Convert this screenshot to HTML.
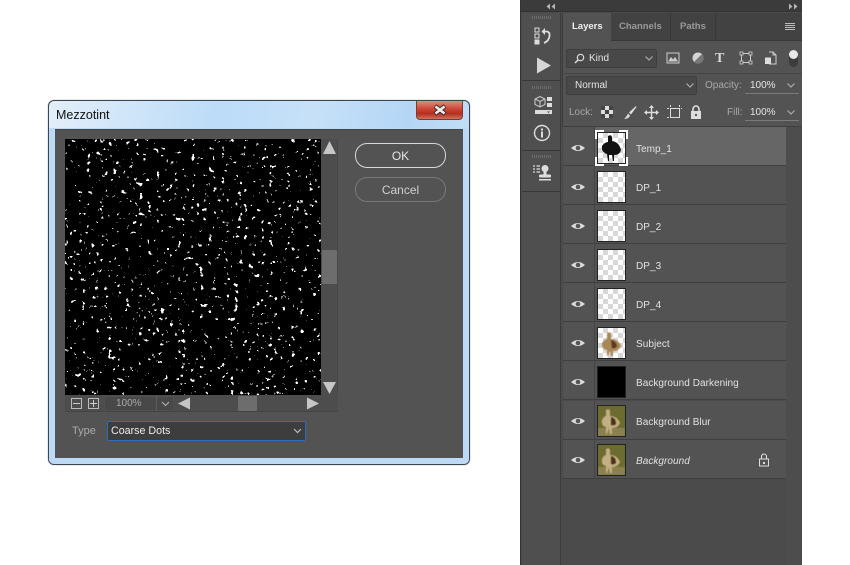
<!DOCTYPE html>
<html><head><meta charset="utf-8"><style>
*{box-sizing:border-box}
html,body{margin:0;padding:0;background:#fff}
body{width:850px;height:565px;position:relative;overflow:hidden;font-family:"Liberation Sans",sans-serif;font-size:10px;color:#ddd}
.a{position:absolute}
.t{position:absolute;white-space:nowrap;line-height:14px}
.row{position:absolute;left:563px;width:223px;height:39px;border-bottom:1px solid #3f3f3f;background:#535353}
.eyec{position:absolute;left:0;top:0;width:32px;height:38px;border-right:1px solid #454545}
.thumb{position:absolute;left:597px;width:29px;height:32px;border:1px solid #222;background-color:#fff;background-image:linear-gradient(45deg,#d8d8d8 25%,transparent 25%,transparent 75%,#d8d8d8 75%),linear-gradient(45deg,#d8d8d8 25%,transparent 25%,transparent 75%,#d8d8d8 75%);background-size:10px 10px;background-position:0 0,5px 5px}
.lbl{position:absolute;left:636px;color:#e2e2e2;font-size:10px;line-height:14px;white-space:nowrap;letter-spacing:.05px}
.bl{filter:blur(.6px)}
</style></head><body>

<!-- Dialog -->
<div class="a" style="left:48px;top:100px;width:422px;height:365px;border:1px solid #3c4650;border-radius:6px;background:linear-gradient(100deg,#e3eefa 0%,#bcdcf8 35%,#c6e0f8 55%,#b4d6f5 75%,#cfe4f8 100%);box-shadow:0 0 1px #777"></div>
<div class="a" style="left:49px;top:128px;width:420px;height:336px;border-radius:0 0 5px 5px;background:#bcd9f5"></div>
<div class="t" style="left:56px;top:108px;color:#111;font-size:12.500px">Mezzotint</div>
<div class="a" style="left:416px;top:101px;width:47px;height:19px;border:1px solid #7d3a33;border-top:0;border-radius:0 0 4px 4px;background:linear-gradient(#e08d7f,#c9402f 50%,#b32f22 70%,#d0705c)"></div>
<svg class="a" style="left:432px;top:104px" width="16" height="12"><path d="M3 2 L13 10 M13 2 L3 10" stroke="#3a2a2a" stroke-width="4.400"/><path d="M3.500 2.500 L12.500 9.500 M12.500 2.500 L3.500 9.500" stroke="#f2ecec" stroke-width="2.600"/></svg>

<div class="a" style="left:55px;top:129px;width:408px;height:329px;background:#535353;border-top:1px solid #444"></div>

<!-- Preview -->
<svg class="a" style="left:65px;top:139px" width="256" height="256" shape-rendering="crispEdges">
<defs><filter id="n" x="0" y="0" width="100%" height="100%" color-interpolation-filters="sRGB">
<feTurbulence type="fractalNoise" baseFrequency="0.23" numOctaves="3" seed="7"/>
<feColorMatrix type="matrix" values="0 0 0 0 1 0 0 0 0 1 0 0 0 0 1 9 9 0 0 -11.100"/>
<feComponentTransfer><feFuncA type="discrete" tableValues="0 0 1 1"/></feComponentTransfer>
</filter></defs>
<rect width="256" height="256" fill="#000"/>
<rect width="256" height="256" filter="url(#n)"/>
</svg>

<!-- Preview scrollbars -->
<div class="a" style="left:321px;top:139px;width:17px;height:272px;background:#4d4d4d;border-right:1px solid #474747"></div>
<div class="a" style="left:65px;top:395px;width:273px;height:17px;background:#4d4d4d;border-bottom:1px solid #444"></div>
<svg class="a" style="left:322px;top:140px" width="15" height="268"><path d="M1 14 L7.500 1 L14 14Z" fill="#c6c6c6"/><path d="M1 242 H14 L7.500 254Z" fill="#c6c6c6"/><rect x="0" y="110" width="15" height="34" rx="1" fill="#6d6d6d"/></svg>
<div class="a" style="left:71px;top:398px;width:11px;height:11px;border:1px solid #bbb"></div>
<div class="a" style="left:73px;top:403px;width:7px;height:1px;background:#ccc"></div>
<div class="a" style="left:88px;top:398px;width:11px;height:11px;border:1px solid #bbb"></div>
<div class="a" style="left:90px;top:403px;width:7px;height:1px;background:#ccc"></div>
<div class="a" style="left:93px;top:400px;width:1px;height:7px;background:#ccc"></div>
<div class="a" style="left:104px;top:396px;width:70px;height:15px;background:#484848;border:1px solid #505050"></div>
<div class="t" style="left:116px;top:397px;color:#a8a8a8;font-size:10px">100%</div>
<div class="a" style="left:156px;top:396px;width:1px;height:15px;background:#5c5c5c"></div>
<svg class="a" style="left:160px;top:400px" width="11" height="8"><path d="M2 2 L5.500 5.500 L9 2" stroke="#aaa" fill="none" stroke-width="1.200"/></svg>
<svg class="a" style="left:177px;top:396px" width="143" height="15"><path d="M1 7.500 L13 1.500 V13.500Z" fill="#c6c6c6"/><path d="M142 7.500 L130 1.500 V13.500Z" fill="#c6c6c6"/><rect x="61" y="0" width="19" height="15" rx="1" fill="#6d6d6d"/></svg>

<div class="t" style="left:72px;top:424px;color:#aaa;font-size:11px">Type</div>
<div class="a" style="left:107px;top:421px;width:199px;height:20px;background:#3d3d3d;border:1px solid #2f6db5;border-radius:2px"></div>
<div class="t" style="left:111px;top:424px;color:#ececec;font-size:10.700px">Coarse Dots</div>
<svg class="a" style="left:292px;top:427px" width="11" height="8"><path d="M2 2 L5.500 5.500 L9 2" stroke="#bbb" fill="none" stroke-width="1.200"/></svg>

<div class="a" style="left:355px;top:143px;width:91px;height:25px;border:1px solid #d8d8d8;border-radius:12px"></div>
<div class="t" style="left:355px;top:149px;width:91px;text-align:center;color:#e6e6e6;font-size:12px">OK</div>
<div class="a" style="left:355px;top:177px;width:91px;height:25px;border:1px solid #787878;border-radius:12px"></div>
<div class="t" style="left:355px;top:183px;width:91px;text-align:center;color:#d0d0d0;font-size:12px">Cancel</div>

<!-- Photoshop panel -->
<div class="a" style="left:520px;top:0;width:282px;height:565px;background:#4b4b4b;border-left:1px solid #333"></div>
<div class="a" style="left:521px;top:0;width:281px;height:12px;background:#3b3b3b;border-bottom:1px solid #333"></div>
<svg class="a" style="left:546px;top:3px" width="10" height="7"><path d="M4 0.500 L0.500 3.500 L4 6.500Z M9 0.500 L5.500 3.500 L9 6.500Z" fill="#b4b4b4"/></svg>
<svg class="a" style="left:788px;top:3px" width="10" height="7"><path d="M1 0.500 L4.500 3.500 L1 6.500Z M6 0.500 L9.500 3.500 L6 6.500Z" fill="#b4b4b4"/></svg>

<!-- left icon dock -->
<div class="a" style="left:522px;top:13px;width:39px;height:552px;background:#4f4f4f;border-right:1px solid #3c3c3c"></div>
<div class="a" style="left:522px;top:80px;width:39px;height:1px;background:#383838"></div>
<div class="a" style="left:522px;top:150px;width:39px;height:1px;background:#383838"></div>
<div class="a" style="left:522px;top:191px;width:39px;height:1px;background:#383838"></div>
<div class="a" style="left:532px;top:16px;width:19px;height:3px;background:repeating-linear-gradient(90deg,#6b6b6b 0 1px,transparent 1px 2px)"></div>
<div class="a" style="left:532px;top:86px;width:19px;height:3px;background:repeating-linear-gradient(90deg,#6b6b6b 0 1px,transparent 1px 2px)"></div>
<div class="a" style="left:532px;top:155px;width:19px;height:3px;background:repeating-linear-gradient(90deg,#6b6b6b 0 1px,transparent 1px 2px)"></div>
<svg class="a" style="left:534px;top:27px" width="18" height="19"><rect x="1" y="1" width="4" height="4" fill="none" stroke="#ddd"/><rect x="1" y="7" width="4" height="4" fill="none" stroke="#ddd"/><rect x="0.500" y="12.500" width="5" height="5" fill="#ddd"/><path d="M9 4.500 H13 Q16 5 15.500 9 Q15 14 10 16" fill="none" stroke="#ddd" stroke-width="1.800"/><path d="M11 1 L7.500 4.500 L11 8Z" fill="#ddd"/></svg>
<svg class="a" style="left:536px;top:57px" width="16" height="17"><path d="M1 0.500 L15 8.500 L1 16.500Z" fill="#d6d6d6"/></svg>
<svg class="a" style="left:534px;top:96px" width="19" height="20"><path d="M6 0.500 L11 3 V8.500 L6 11 L1 8.500 V3Z M1 3 L6 5.500 L11 3 M6 5.500 V11" fill="none" stroke="#ccc"/><rect x="13" y="1" width="5" height="4" fill="#ddd"/><rect x="13" y="7" width="5" height="4" fill="#ddd"/><rect x="1" y="14" width="17" height="4" fill="#ddd"/><path d="M13 15.500 H16 L14.500 17Z" fill="#444"/></svg>
<svg class="a" style="left:533px;top:124px" width="18" height="18"><circle cx="9" cy="9" r="7.500" fill="none" stroke="#ddd" stroke-width="1.400"/><rect x="8" y="7.500" width="2" height="6" fill="#ddd"/><rect x="8" y="4.500" width="2" height="2" fill="#ddd"/></svg>
<svg class="a" style="left:532px;top:164px" width="20" height="18"><path d="M1 2 H3 M4.500 2 H8 M1 5 H3 M4.500 5 H8 M1 8 H3 M4.500 8 H8" stroke="#ddd" stroke-width="1.200"/><circle cx="13" cy="4.500" r="3.500" fill="#ddd"/><rect x="11.500" y="6" width="3" height="5" fill="#ddd"/><rect x="7" y="10.500" width="12" height="3" rx="1" fill="#ddd"/><rect x="7" y="15" width="12" height="1.500" fill="#ddd"/></svg>

<!-- main panel -->
<div class="a" style="left:562px;top:13px;width:240px;height:114px;background:#535353;border-left:1px solid #3c3c3c"></div>
<div class="a" style="left:786px;top:127px;width:14px;height:438px;background:#4d4d4d"></div>
<div class="a" style="left:563px;top:479px;width:223px;height:86px;background:#4b4b4b"></div>
<div class="a" style="left:563px;top:13px;width:239px;height:28px;background:#424242;border-bottom:1px solid #393939"></div>
<div class="a" style="left:563px;top:13px;width:48px;height:29px;background:#535353"></div>
<div class="a" style="left:670px;top:13px;width:1px;height:28px;background:#383838"></div>
<div class="a" style="left:715px;top:13px;width:1px;height:28px;background:#383838"></div>
<div class="t" style="left:572px;top:20px;color:#f0f0f0;font-weight:bold;font-size:9.500px">Layers</div>
<div class="t" style="left:619px;top:20px;color:#9a9a9a;font-weight:bold;font-size:9.500px">Channels</div>
<div class="t" style="left:680px;top:20px;color:#9a9a9a;font-weight:bold;font-size:9.500px">Paths</div>
<div class="a" style="left:785px;top:23px;width:10px;height:8px;background:repeating-linear-gradient(#bbb 0 1px,transparent 1px 2px)"></div>

<!-- Kind row -->
<div class="a" style="left:566px;top:49px;width:91px;height:19px;background:#484848;border:1px solid #3f3f3f;border-radius:2px"></div>
<svg class="a" style="left:574px;top:53px" width="11" height="11"><circle cx="6.500" cy="4.500" r="3.200" fill="none" stroke="#ddd" stroke-width="1.200"/><path d="M4 7 L1 10" stroke="#ddd" stroke-width="1.500"/></svg>
<div class="t" style="left:589px;top:52px;color:#e4e4e4">Kind</div>
<svg class="a" style="left:644px;top:55px" width="10" height="7"><path d="M1.500 1.500 L5 5 L8.500 1.500" stroke="#aaa" fill="none" stroke-width="1.200"/></svg>
<svg class="a" style="left:666px;top:52px" width="14" height="12"><rect x="1" y="1" width="12" height="10" fill="none" stroke="#ccc"/><path d="M2 9.500 L5 5 L7 7.500 L9 5 L12 9.500Z" fill="#ccc"/></svg>
<svg class="a" style="left:691px;top:51px" width="14" height="14"><circle cx="7" cy="7" r="5.500" fill="#d4d4d4"/><path d="M10.900 3.100 A5.500 5.500 0 0 1 3.100 10.900Z" fill="#777"/></svg>
<div class="t" style="left:715px;top:51px;color:#d8d8d8;font:bold 14px 'Liberation Serif',serif">T</div>
<svg class="a" style="left:739px;top:51px" width="14" height="14"><rect x="2.500" y="2.500" width="9" height="9" fill="none" stroke="#ccc"/><rect x="1" y="1" width="3" height="3" fill="#555" stroke="#ccc" stroke-width=".8"/><rect x="10" y="1" width="3" height="3" fill="#555" stroke="#ccc" stroke-width=".8"/><rect x="1" y="10" width="3" height="3" fill="#555" stroke="#ccc" stroke-width=".8"/><rect x="10" y="10" width="3" height="3" fill="#555" stroke="#ccc" stroke-width=".8"/></svg>
<svg class="a" style="left:764px;top:51px" width="13" height="14"><path d="M5 1 H9 L12 4 V13 H5" fill="none" stroke="#ccc"/><path d="M9 1 V4 H12" fill="none" stroke="#ccc"/><rect x="1" y="6.500" width="6" height="6.500" fill="#ddd"/></svg>
<div class="a" style="left:789px;top:50px;width:9px;height:17px;background:#3c3c3c;border-radius:5px"></div>
<div class="a" style="left:789px;top:50px;width:9px;height:9px;background:#e8e8e8;border-radius:50%"></div>

<div class="a" style="left:563px;top:73px;width:239px;height:1px;background:#444"></div>
<!-- Normal row -->
<div class="a" style="left:566px;top:76px;width:131px;height:19px;background:#484848;border:1px solid #3f3f3f;border-radius:2px"></div>
<div class="t" style="left:575px;top:79px;color:#e4e4e4">Normal</div>
<svg class="a" style="left:685px;top:82px" width="10" height="7"><path d="M1.500 1.500 L5 5 L8.500 1.500" stroke="#aaa" fill="none" stroke-width="1.200"/></svg>
<div class="t" style="left:705px;top:79px;color:#a8a8a8">Opacity:</div>
<div class="t" style="left:750px;top:79px;color:#e4e4e4">100%</div>
<svg class="a" style="left:786px;top:82px" width="10" height="7"><path d="M1.500 1.500 L5 5 L8.500 1.500" stroke="#aaa" fill="none" stroke-width="1.200"/></svg>
<div class="a" style="left:745px;top:93px;width:54px;height:1px;background:#7a7a7a"></div>

<!-- Lock row -->
<div class="t" style="left:569px;top:106px;color:#a8a8a8">Lock:</div>
<svg class="a" style="left:601px;top:106px" width="12" height="12"><rect width="12" height="12" fill="#ddd"/><path d="M0 0H4V4H0Z M8 0H12V4H8Z M4 4H8V8H4Z M0 8H4V12H0Z M8 8H12V12H8Z" fill="#444"/></svg>
<svg class="a" style="left:623px;top:105px" width="14" height="15"><path d="M13 1 L6 7.500 L8 9.500 L13.500 2Z" fill="#ddd"/><path d="M5 8.500 L7 10.500 Q6 14 1 14 Q3.500 12 5 8.500Z" fill="#ddd"/></svg>
<svg class="a" style="left:644px;top:105px" width="15" height="15"><path d="M7.500 1 V14 M1 7.500 H14" stroke="#ddd" stroke-width="1.400"/><path d="M7.500 0 L10 3 H5Z M7.500 15 L10 12 H5Z M0 7.500 L3 5 V10Z M15 7.500 L12 5 V10Z" fill="#ddd"/></svg>
<svg class="a" style="left:667px;top:105px" width="15" height="15"><rect x="3.500" y="3.500" width="9" height="9" fill="none" stroke="#ddd"/><path d="M0 3.500 H2 M3.500 0 V2 M12.500 0 V2 M14 3.500 H15 M0 12.500 H2" stroke="#ddd"/></svg>
<svg class="a" style="left:690px;top:105px" width="12" height="14"><path d="M3 7 V4 A3 3 0 0 1 9 4 V7" fill="none" stroke="#ddd" stroke-width="1.600"/><rect x="1" y="6" width="10" height="8" fill="#ddd"/><rect x="5" y="9" width="2" height="2" fill="#555"/></svg>
<div class="t" style="left:727px;top:106px;color:#a8a8a8">Fill:</div>
<div class="t" style="left:750px;top:106px;color:#e4e4e4">100%</div>
<svg class="a" style="left:786px;top:109px" width="10" height="7"><path d="M1.500 1.500 L5 5 L8.500 1.500" stroke="#aaa" fill="none" stroke-width="1.200"/></svg>
<div class="a" style="left:745px;top:120px;width:54px;height:1px;background:#7a7a7a"></div>
<div class="a" style="left:563px;top:126px;width:239px;height:1px;background:#3f3f3f"></div>

<!-- Layers rows -->
<div class="row" style="top:127px;background:#666"><div class="eyec" style="background:#535353"></div></div>
<div class="row" style="top:166px"><div class="eyec"></div></div>
<div class="row" style="top:205px"><div class="eyec"></div></div>
<div class="row" style="top:244px"><div class="eyec"></div></div>
<div class="row" style="top:283px"><div class="eyec"></div></div>
<div class="row" style="top:322px"><div class="eyec"></div></div>
<div class="row" style="top:361px"><div class="eyec"></div></div>
<div class="row" style="top:401px"><div class="eyec"></div></div>
<div class="row" style="top:440px"><div class="eyec"></div></div>

<svg class="a" style="left:570px;top:128px" width="16" height="352" fill="#dcdcdc">
<defs><g id="e"><path d="M1 0 Q8 -6 15 0 Q8 6 1 0Z" fill="#dcdcdc"/><circle cx="8" cy="0" r="2.300" fill="#555"/></g></defs>
<use href="#e" y="20"/><use href="#e" y="59"/><use href="#e" y="98"/><use href="#e" y="137"/><use href="#e" y="176"/><use href="#e" y="215"/><use href="#e" y="254"/><use href="#e" y="293"/><use href="#e" y="332"/>
</svg>

<!-- Thumbs -->
<div class="thumb" style="top:132px"></div>
<svg class="a" style="left:595px;top:130px" width="33" height="36"><path d="M1 9V1H9M24 1H32V9M32 27V35H24M9 35H1V27" stroke="#fff" stroke-width="2" fill="none"/><path d="M13 6 Q16 4 17 7 L17 11 Q24 12 26 20 Q25 25 19 25 L19 31 L18 31 L17 25 L14 25 L14 31 L13 31 L12 24 Q6 22 7 16 Q10 12 13 12Z" fill="#111"/></svg>
<div class="thumb" style="top:171px"></div>
<div class="thumb" style="top:210px"></div>
<div class="thumb" style="top:249px"></div>
<div class="thumb" style="top:288px"></div>
<div class="thumb" style="top:327px"></div>
<svg class="a" style="left:598px;top:328px" width="27" height="30"><g class="bl"><path d="M9 5 Q12 3 13 6 L13 11 Q20 11 23 18 Q21 23 15 23 L15 28 L13 28 L12 23 L10 28 L9 28 L9 22 Q3 21 4 15 Q7 11 9 11Z" fill="#a98655"/><path d="M13 12 Q18 13 19 18 Q17 21 14 20Z" fill="#5b3a20"/></g></svg>
<div class="thumb" style="top:366px;background:#000"></div>
<div class="thumb" style="top:405px;background:#6f6a32"></div>
<svg class="a" style="left:598px;top:406px" width="27" height="30"><rect width="27" height="30" fill="#6d6c30"/><g class="bl"><rect y="22" width="27" height="8" fill="#8b8150"/><path d="M8 4 Q11 2 12 5 L12 10 Q19 10 22 17 Q20 22 14 22 L14 28 L12 28 L11 22 L9 28 L8 28 L8 21 Q3 20 4 14 Q6 10 8 10Z" fill="#c2b083"/><path d="M13 11 Q18 12 18 18 Q16 20 13 19Z" fill="#4d3018"/></g></svg>
<div class="thumb" style="top:444px;background:#6f6a32"></div>
<svg class="a" style="left:598px;top:445px" width="27" height="30"><rect width="27" height="30" fill="#6d6c30"/><g class="bl"><rect y="22" width="27" height="8" fill="#8b8150"/><path d="M8 4 Q11 2 12 5 L12 10 Q19 10 22 17 Q20 22 14 22 L14 28 L12 28 L11 22 L9 28 L8 28 L8 21 Q3 20 4 14 Q6 10 8 10Z" fill="#c2b083"/><path d="M13 11 Q18 12 18 18 Q16 20 13 19Z" fill="#4d3018"/></g></svg>

<div class="lbl" style="top:143px">Temp_1</div>
<div class="lbl" style="top:182px">DP_1</div>
<div class="lbl" style="top:221px">DP_2</div>
<div class="lbl" style="top:260px">DP_3</div>
<div class="lbl" style="top:299px">DP_4</div>
<div class="lbl" style="top:338px">Subject</div>
<div class="lbl" style="top:377px">Background Darkening</div>
<div class="lbl" style="top:416px">Background Blur</div>
<div class="lbl" style="top:455px;font-style:italic">Background</div>
<svg class="a" style="left:758px;top:453px" width="12" height="14"><path d="M3.500 6 V3.500 A2.500 2.500 0 0 1 8.500 3.500 V6" fill="none" stroke="#ddd" stroke-width="1.100"/><rect x="1.500" y="6" width="9" height="7" fill="none" stroke="#ddd"/><rect x="5" y="9" width="2" height="2" fill="#ddd"/></svg>

</body></html>
